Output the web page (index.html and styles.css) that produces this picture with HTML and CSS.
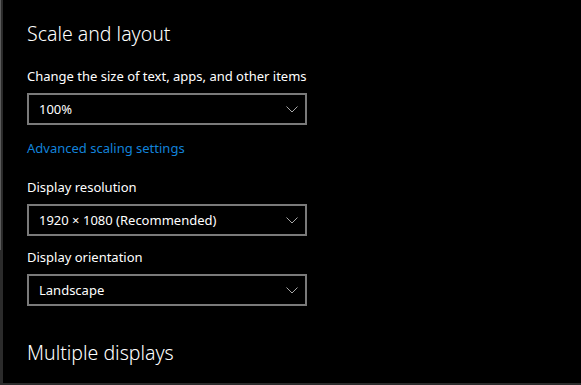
FILE: index.html
```html
<!DOCTYPE html>
<html lang="en">
<head>
  <meta charset="UTF-8">
  <title>Display settings</title>
  <link rel="stylesheet" href="styles.css">
</head>
<body>
  <div class="pane">
    <div class="settings">
      <h2 class="section-title">Scale and layout</h2>

      <div class="field-label first">Change the size of text, apps, and other items</div>
      <div class="combo">
        <span>100%</span>
        <svg class="chevron" width="12" height="7" viewBox="0 0 12 7"><path d="M0.5 0.5 L6 6 L11.5 0.5" fill="none" stroke="#a8a8a8" stroke-width="1"/></svg>
      </div>

      <a class="link" href="#">Advanced scaling settings</a>

      <div class="field-label after-link">Display resolution</div>
      <div class="combo">
        <span>1920 × 1080 (Recommended)</span>
        <svg class="chevron" width="12" height="7" viewBox="0 0 12 7"><path d="M0.5 0.5 L6 6 L11.5 0.5" fill="none" stroke="#a8a8a8" stroke-width="1"/></svg>
      </div>

      <div class="field-label">Display orientation</div>
      <div class="combo">
        <span>Landscape</span>
        <svg class="chevron" width="12" height="7" viewBox="0 0 12 7"><path d="M0.5 0.5 L6 6 L11.5 0.5" fill="none" stroke="#a8a8a8" stroke-width="1"/></svg>
      </div>

      <h2 class="section-title section-next">Multiple displays</h2>
    </div>
  </div>
</body>
</html>
```

FILE: styles.css
```css
body {
  margin: 0;
  background-color: black;
  color: white;
  font-family: "Noto Sans", "Open Sans", sans-serif;
  overflow: hidden;
}
.pane {
  position: relative;
  height: 385px;
  box-sizing: border-box;
  border-left: 3px solid #2b2b2b;
  border-bottom: 2px solid #2b2b2b;
}
/* thin scrollbar edge of the neighbouring pane */
.pane::before {
  content: "";
  position: absolute;
  left: -3px;
  top: 0;
  width: 1px;
  height: 250px;
  background: #5c5c5c;
}
.settings {
  padding: 20px 0 0 24px;
}
.section-title {
  margin: 0;
  font-size: 19.5px;
  font-weight: 300;
  line-height: 28px;
}
.section-next {
  margin-top: 33px;
}
.field-label {
  margin-top: 11px;
  font-size: 13px;
  line-height: 20px;
}
.field-label.first {
  margin-top: 18px;
}
.field-label.after-link {
  margin-top: 19px;
}
.combo {
  margin-top: 7px;
  width: 280px;
  height: 32px;
  box-sizing: border-box;
  border: 2px solid #7a7a7a;
  padding: 0 7px 0 10px;
  display: flex;
  align-items: center;
  justify-content: space-between;
  font-size: 13px;
}
.chevron {
  display: block;
}
.link {
  display: block;
  margin-top: 13px;
  font-size: 13px;
  line-height: 20px;
  color: #1283da;
  text-decoration: none;
}
```
